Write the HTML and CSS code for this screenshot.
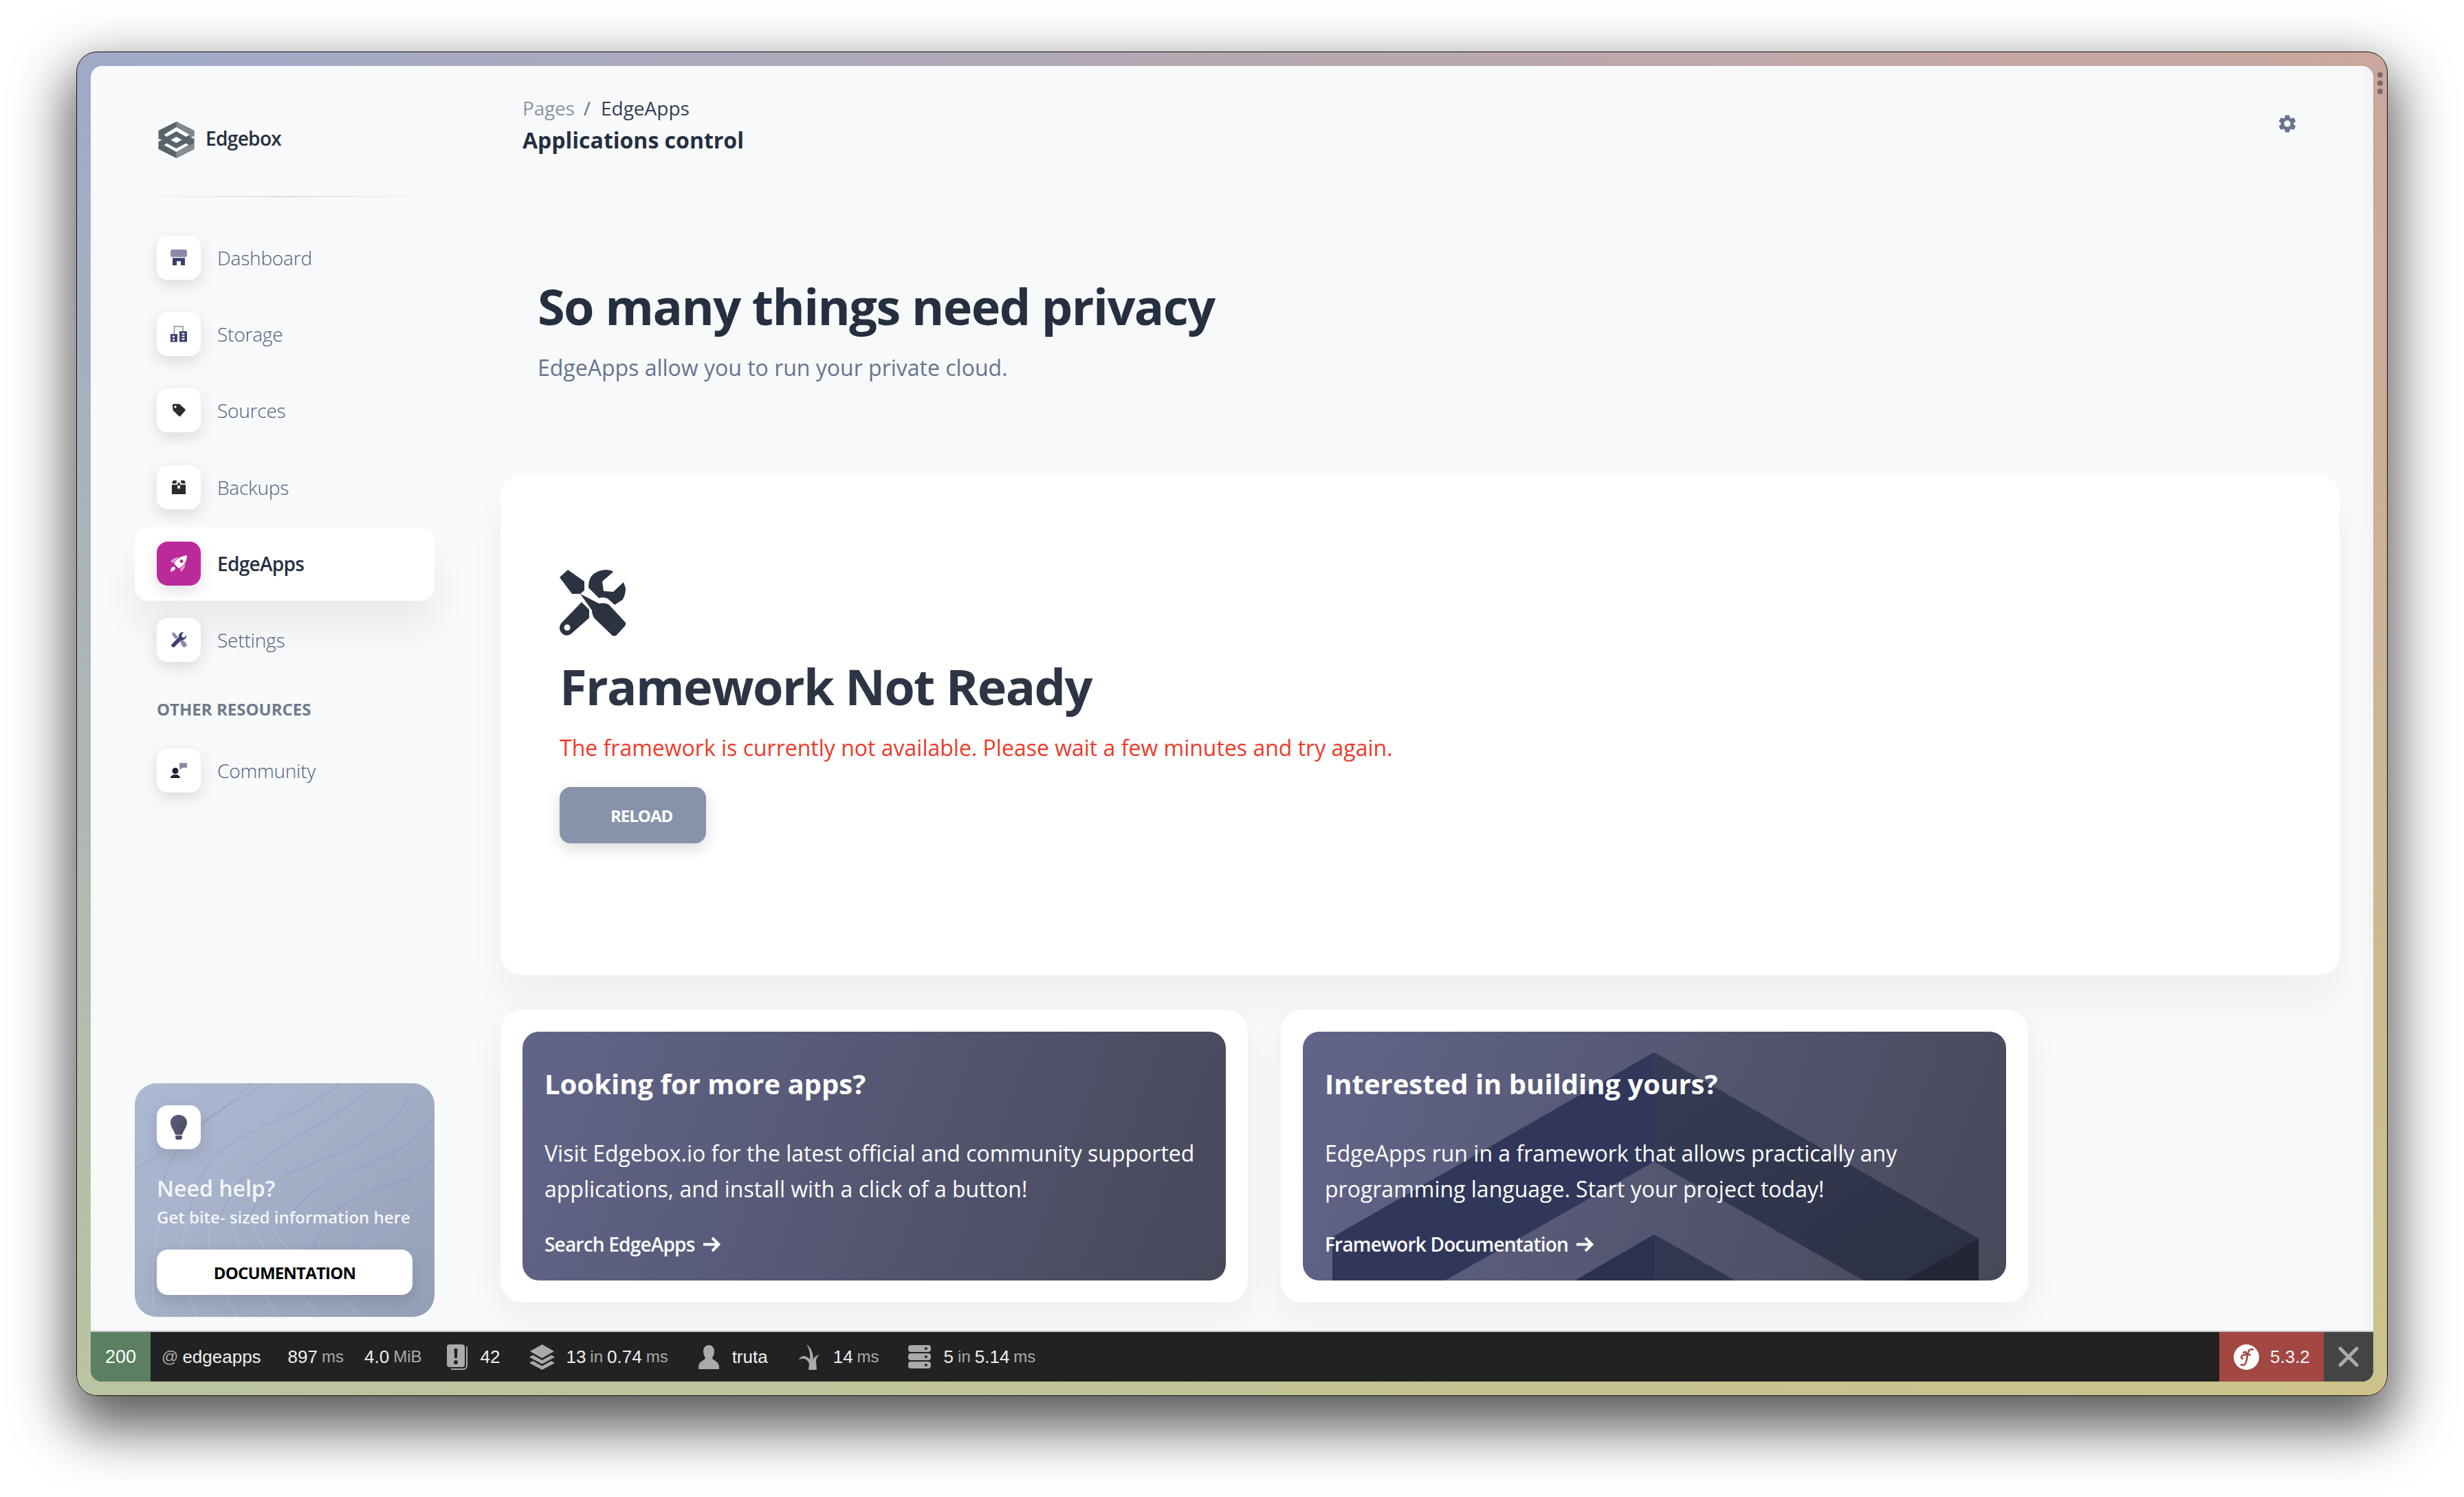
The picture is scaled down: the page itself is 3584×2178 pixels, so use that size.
FILE: index.html
```html
<!DOCTYPE html>
<html lang="en">
<head>
<meta charset="utf-8">
<title>Edgebox - Applications control</title>
<link rel="stylesheet" href="styles.css">
</head>
<body>
<div class="window">
  <div class="frame-tint"></div>
  <div class="frame-dots"><i></i><i></i><i></i></div>
  <div class="app">
    <div class="content">
      <aside class="sidebar">
        <div class="brand">
          <svg class="brand-logo" viewBox="0 0 52 53">
            <polygon fill="#59636a" points="26,0 52,13 52,40 26,53 0,40 0,13"/>
            <polygon fill="#7f878c" points="26,0 52,13 52,25 26,12"/>
            <polygon fill="#868e92" points="26,53 52,40 52,31 26,44"/>
            <polygon fill="#fff" points="26,8 45,19 40,22 26,14 12,22 8,19"/>
            <polygon fill="#fff" points="26,22 34,26.500 26,31 18,26.500"/>
            <polygon fill="#fff" points="8,34 12,31.500 26,39 40,31.500 44,34 26,44"/>
            <polygon fill="#fff" points="0,25 5,27 0,29"/>
            <polygon fill="#fff" points="52,25 47,23 52,21"/>
          </svg>
          <span class="brand-name">Edgebox</span>
        </div>
        <div class="divider"></div>
        <nav class="nav">
          <a class="nav-item">
            <span class="nav-icon"><svg viewBox="0 0 24 24" class="ico"><path fill="#8a8ba8" d="M3 0h18a3 3 0 0 1 3 3v6c0 1-1 2-2 1.400-1 .8-2 .8-3 0-1 .8-3 .8-4 0-1 .8-3 .8-4 0-1 .8-3 .8-4 0-1 .8-3 .8-4 0-1 .6-3 .6-3-1.400V3a3 3 0 0 1 3-3z"/><path fill="#3a416f" d="M3 12c1 .4 2 .4 3 0 1 .6 3 .6 4 0 1 .6 3 .6 4 0 1 .6 3 .6 4 0 1 .4 2 .4 3 0v11h-6v-6H9v6H3z"/></svg></span>
            <span>Dashboard</span>
          </a>
          <a class="nav-item">
            <span class="nav-icon"><svg viewBox="0 0 24 24" class="ico"><path fill="none" stroke="#8a8ba8" stroke-width="1.500" d="M5.500 12V1H18v7"/><path fill="#3a416f" d="M0 12h10v11.500H0zM13 8h11v15.500H13z"/><path fill="#fff" d="M3 14.500h3v2.500H3zM3 19h3v2.500H3zM16.500 10.500h4v2h-4zM16.500 14.500h4v2h-4zM16.500 18.500h4v2h-4z"/></svg></span>
            <span>Storage</span>
          </a>
          <a class="nav-item">
            <span class="nav-icon"><svg viewBox="0 0 24 24" class="ico ico-sm"><path fill="#2b2b2b" fill-rule="evenodd" d="M3 1h10l10 9a2 2 0 0 1 0 3l-8 9a2 2 0 0 1-3 0L2 12 1 3a2 2 0 0 1 2-2zm3 3a2 2 0 1 0 0 4 2 2 0 0 0 0-4z"/></svg></span>
            <span>Sources</span>
          </a>
          <a class="nav-item">
            <span class="nav-icon"><svg viewBox="0 0 24 24" class="ico ico-md"><path fill="#2b2b2b" fill-rule="evenodd" d="M3 1h6L8 6H1zM15 1h6l2 5h-7zM1 8h8.500L12 3l2.500 5H23v14a1 1 0 0 1-1 1H2a1 1 0 0 1-1-1zm9 1v5h4V9z"/></svg></span>
            <span>Backups</span>
          </a>
          <a class="nav-item active">
            <span class="nav-icon"><svg viewBox="0 0 24 24" class="ico"><path fill="#fff" fill-rule="evenodd" d="M24 0c0 8-4 15-12 19l-7-7C9 5 15 1 24 0zM16 6a2.500 2.500 0 1 0 0 5 2.500 2.500 0 0 0 0-5zM3 17c2-1 4 0 4 2 0 2-4 4-7 5 0-2 1-6 3-7z"/><path fill="#e6a9d8" d="M21 12c1 4-1 9-6 12l-1-4zM12 3C8 3 3 4 0 9l4 2z" opacity=".9"/></svg></span>
            <span>EdgeApps</span>
          </a>
          <a class="nav-item">
            <span class="nav-icon"><svg viewBox="0 0 24 24" class="ico"><path fill="#8a8ba8" d="M2 1l4 1 5 6-3 3-5-5zM14 14l3-3 6 6c1 2 1 4-1 5-2 1-3 1-5-1z"/><path fill="#3a416f" d="M23 5c1 4-3 8-7 7L6 22c-1 1-3 1-4 0s-1-3 0-4L12 8c-1-4 3-8 7-7l-3 4 1 3 3 1z"/></svg></span>
            <span>Settings</span>
          </a>
        </nav>
        <h6 class="nav-heading">OTHER RESOURCES</h6>
        <nav class="nav">
          <a class="nav-item">
            <span class="nav-icon"><svg viewBox="0 0 24 24" class="ico"><path fill="#8a8ba8" d="M13 1h11v7h-7l-3 3-1-3z"/><path fill="#1f2337" d="M7 8a4.500 4.500 0 1 1 0 9 4.500 4.500 0 0 1 0-9zM0 23c0-3 3-5 7-5s7 2 7 5z"/></svg></span>
            <span>Community</span>
          </a>
        </nav>
        <div class="help">
          <svg class="help-lines" viewBox="0 0 436 340" preserveAspectRatio="none">
            <g fill="none" stroke="#7480a0" stroke-opacity=".22" stroke-width="1.500">
              <path d="M0 125C60 90 130 40 170 0"/>
              <path d="M40 150C60 60 130 40 190 0"/>
              <path d="M80 190C100 60 200 80 300 0"/>
              <path d="M120 210C150 90 270 80 350 0"/>
              <path d="M170 190C200 100 330 130 400 20"/>
              <path d="M210 220C260 110 370 140 436 50"/>
              <path d="M260 240C290 140 380 170 436 110"/>
              <path d="M300 270C340 190 390 210 436 170"/>
            </g>
            <g fill="none" stroke="#fff" stroke-opacity=".14" stroke-width="1.500">
              <path d="M30 340C20 280 30 200 50 170"/>
              <path d="M90 340C70 290 60 240 80 190"/>
              <path d="M150 340C120 290 100 240 110 200"/>
              <path d="M210 340C170 280 150 250 140 190"/>
              <path d="M270 340C230 290 190 260 170 200"/>
              <path d="M330 340C280 290 230 260 200 210"/>
            </g>
          </svg>
          <span class="nav-icon help-icon"><svg viewBox="0 0 24 36" class="bulb"><defs><linearGradient id="bulbg" x1="0" y1="0" x2="1" y2="1"><stop offset="0" stop-color="#5c5f80"/><stop offset="1" stop-color="#45475a"/></linearGradient></defs><path fill="url(#bulbg)" d="M12 0c7 0 12 5 12 11 0 7-5 11-7 18H7C5 22 0 18 0 11 0 5 5 0 12 0zM9 30h6c1 0 2 1 2 2.500S16 36 15 36H9c-1 0-2-2-2-3.500S8 30 9 30z"/></svg></span>
          <div class="help-title">Need help?</div>
          <div class="help-sub">Get bite- sized information here</div>
          <a class="help-btn">DOCUMENTATION</a>
        </div>
      </aside>
      <main class="main">
        <header class="topbar">
          <div>
            <div class="crumbs"><span class="crumb-muted">Pages</span><span class="crumb-sep">/</span><span class="crumb-now">EdgeApps</span></div>
            <div class="page-title">Applications control</div>
          </div>
          <svg class="gear" viewBox="2.500 2 19 20"><path fill="#67748e" d="M19.140 12.940c.04-.3.06-.61.06-.94 0-.32-.02-.64-.07-.94l2.030-1.580c.18-.14.23-.41.12-.61l-1.920-3.320c-.12-.22-.37-.29-.59-.22l-2.390.96c-.5-.38-1.030-.7-1.620-.94l-.36-2.540c-.04-.24-.24-.41-.48-.41h-3.840c-.24 0-.43.17-.47.41l-.36 2.540c-.59.24-1.130.57-1.620.94l-2.390-.96c-.22-.08-.47 0-.59.22L2.740 8.870c-.12.21-.08.47.12.61l2.030 1.580c-.05.3-.09.63-.09.94s.02.64.07.94l-2.030 1.580c-.18.14-.23.41-.12.61l1.920 3.320c.12.22.37.29.59.22l2.390-.96c.5.38 1.030.7 1.620.94l.36 2.540c.05.24.24.41.48.41h3.840c.24 0 .44-.17.47-.41l.36-2.540c.59-.24 1.130-.56 1.620-.94l2.390.96c.22.08.47 0 .59-.22l1.920-3.320c.12-.22.07-.47-.12-.61l-2.010-1.580zM12 15.600c-1.980 0-3.600-1.620-3.600-3.600s1.620-3.600 3.600-3.600 3.600 1.620 3.600 3.600-1.620 3.600-3.600 3.600z"/></svg>
        </header>
        <section class="hero">
          <h1 class="hero-title">So many things need privacy</h1>
          <p class="hero-sub">EdgeApps allow you to run your private cloud.</p>
        </section>
        <section class="status-card">
          <svg class="tools" viewBox="0 0 96 96"><path fill="#2b3240" d="M12 0 0 11l18 24h12l27 14c5-1 11-1 15 2l24 26v3l-2 3-12 13c-2 2-4 1-5 0L51 71c-3-4-4-8-4-12L30 35l6-5V17z"/><path fill="#2b3240" fill-rule="evenodd" d="M32 47l11 11v12L18 92c-4 4-11 5-15 0-4-4-4-11 0-15zM11 79.500a4.500 4.500 0 1 0 0 9 4.500 4.500 0 0 0 0-9z"/><path fill="#2b3240" d="M68 0l7 1 3 2-16 14 2 14 14 1 15-14 3 9c0 7-2 13-5 17l-11 7-10-9c-4-2-9-2-13-1L42 26c0-6 1-11 3-15 5-7 13-11 23-11z"/></svg>
          <h2 class="status-title">Framework Not Ready</h2>
          <p class="status-msg">The framework is currently not available. Please wait a few minutes and try again.</p>
          <a class="reload">RELOAD</a>
        </section>
        <section class="promo-row">
          <article class="promo">
            <div class="promo-inner">
              <h3 class="promo-title">Looking for more apps?</h3>
              <p class="promo-text">Visit Edgebox.io for the latest official and community supported applications, and install with a click of a button!</p>
              <a class="promo-link">Search EdgeApps <svg class="arrow" viewBox="0 0 25 23"><path fill="none" stroke="#fff" stroke-width="4" d="M0 11.500h22M13 2l9.500 9.500L13 21"/></svg></a>
            </div>
          </article>
          <article class="promo">
            <div class="promo-inner">
              <svg class="promo-art" viewBox="0 0 1023 362" preserveAspectRatio="none">
                <defs>
                  <linearGradient id="artr" x1="0" y1="0" x2="1" y2="1"><stop offset="0" stop-color="#353c56"/><stop offset="1" stop-color="#2c3044"/></linearGradient>
                </defs>
                <polygon fill="#31375a" points="43,299 511,30 511,189 207,362 43,362"/>
                <polygon fill="url(#artr)" points="511,30 983,301 983,362 816,362 511,189"/>
                <polygon fill="#2b3150" points="396,362 511,295 511,362"/>
                <polygon fill="#313750" points="511,295 629,362 511,362"/>
                <polygon fill="#222636" points="983,301 983,362 877,362"/>
              </svg>
              <h3 class="promo-title">Interested in building yours?</h3>
              <p class="promo-text">EdgeApps run in a framework that allows practically any programming language. Start your project today!</p>
              <a class="promo-link">Framework Documentation <svg class="arrow" viewBox="0 0 25 23"><path fill="none" stroke="#fff" stroke-width="4" d="M0 11.500h22M13 2l9.500 9.500L13 21"/></svg></a>
            </div>
          </article>
        </section>
      </main>
    </div>
    <footer class="debug">
      <span class="dbg-status">200</span>
      <span class="dbg-item route"><em>@</em> edgeapps</span>
      <span class="dbg-item time">897 <em>ms</em></span>
      <span class="dbg-item mem">4.0 <em>MiB</em></span>
      <span class="dbg-item logs"><svg class="dbg-ico" viewBox="0 0 30 37"><path fill="#aaa" fill-rule="evenodd" d="M4 0h18a4 4 0 0 1 4 4v25a4 4 0 0 1-4 4H4a4 4 0 0 1-4-4V4a4 4 0 0 1 4-4zM10.500 6l.7 14h3.600l.7-14zM13 23a3 3 0 1 0 0 6 3 3 0 0 0 0-6z"/><path fill="none" stroke="#aaa" stroke-width="2" d="M29 3v28a5 5 0 0 1-5 5H6"/></svg>42</span>
      <span class="dbg-item forms"><svg class="dbg-ico" viewBox="0 0 37 37"><path fill="#aaa" d="M18.500 0 36 10 18.500 20 1 10zM5 15.500l13.500 7.500L32 15.500l5 3-18.500 10L0 18.500zM5 24l13.500 7.500L32 24l5 3-18.500 10L0 27z"/></svg>13 <em>in</em> 0.74 <em>ms</em></span>
      <span class="dbg-item user"><svg class="dbg-ico" viewBox="0 0 30 35"><path fill="#aaa" d="M15 0c5 0 8 4 8 9 0 4-2 8-3 10 0 3 10 4 10 13v3H0v-3c0-9 10-10 10-13-1-2-3-6-3-10 0-5 3-9 8-9z"/></svg>truta</span>
      <span class="dbg-item twig"><svg class="dbg-ico" viewBox="0 0 31 37"><path fill="#aaa" d="M11 0c7 4 10 14 10 22 1-3 4-6 9-7-4 3-5 7-5 11l1 11H14l1-8c0-4-4-7-7-8-3-1-6 0-8 2 2-6 7-7 11-5 2 1 4 2 5 4C17 14 15 6 11 0z"/></svg>14 <em>ms</em></span>
      <span class="dbg-item db"><svg class="dbg-ico" viewBox="0 0 33 34"><path fill="#aaa" fill-rule="evenodd" d="M4 0h25a4 4 0 0 1 4 4v2a4 4 0 0 1-4 4H4a4 4 0 0 1-4-4V4a4 4 0 0 1 4-4zm22 3a2 2 0 1 0 0 4 2 2 0 0 0 0-4zM4 12h25a4 4 0 0 1 4 4v2a4 4 0 0 1-4 4H4a4 4 0 0 1-4-4v-2a4 4 0 0 1 4-4zm22 3a2 2 0 1 0 0 4 2 2 0 0 0 0-4zM4 24h25a4 4 0 0 1 4 4v2a4 4 0 0 1-4 4H4a4 4 0 0 1-4-4v-2a4 4 0 0 1 4-4zm22 3a2 2 0 1 0 0 4 2 2 0 0 0 0-4z"/></svg>5 <em>in</em> 5.14 <em>ms</em></span>
      <span class="dbg-spacer"></span>
      <span class="dbg-version"><svg class="sf" viewBox="0 0 37 37"><circle cx="18.500" cy="18.500" r="18.500" fill="#fff"/><path fill="none" stroke="#a34743" stroke-width="2.600" d="M29 8c-3-2-7-1-8 4l-3 14c-1 4-4 5-8 3M14 21c-3 0-4-3-1-5 2-1 6-1 5-4-1-2-4-1-4 1M17 15h8"/></svg>5.3.2</span>
      <span class="dbg-close"><svg class="close-x" viewBox="0 0 30 30"><path stroke="#aaa" stroke-width="5" stroke-linecap="round" d="M3 3l24 24M27 3L3 27"/></svg></span>
    </footer>
  </div>
</div>
</body>
</html>
```
FILE: styles.css
```css
* { box-sizing: border-box; }
html, body { margin: 0; height: 100%; background: #fff; overflow: hidden; }
body { padding: 75px 111px 147px 111px; font-family: "Open Sans", "Liberation Sans", sans-serif; color: #252f40; }
em { font-style: normal; }
h1, h2, h3, h6, p { margin: 0; }

.window {
  position: relative; height: 1956px; padding: 20px; border: 1px solid #111; border-radius: 30px;
  background: linear-gradient(to right, #a0aac8, #cba79e);
  box-shadow: 0 36px 80px 12px rgba(0,0,0,.64);
}
.frame-tint {
  position: absolute; inset: 0; border-radius: 29px;
  background: linear-gradient(to right, #b9c4a2, #cdc389);
  -webkit-mask-image: linear-gradient(to bottom, transparent, #000);
  mask-image: linear-gradient(to bottom, transparent, #000);
}
.frame-dots { position: absolute; right: 6px; top: 29px; display: flex; flex-direction: column; gap: 4px; }
.frame-dots i { width: 8px; height: 8px; border-radius: 50%; background: #7f6a62; }

.app { position: relative; height: 100%; display: flex; flex-direction: column; border-radius: 16px; overflow: hidden; background: #f8f9fa; }
.content { flex: 1; display: flex; min-height: 0; box-shadow: inset -30px 0 30px -30px rgba(0,0,0,.05); }

.sidebar { width: 596px; flex: none; padding: 0 96px 20px 64px; display: flex; flex-direction: column; }
.brand { height: 189px; padding: 81px 0 0 34px; display: flex; align-items: flex-start; }
.brand-logo { width: 53px; height: 53px; flex: none; margin-right: 16px; }
.brand-name { font-size: 28px; font-weight: 600; line-height: 48px; color: #252f40; letter-spacing: -.65px; }
.divider { height: 2px; margin: 0 -26px 0 -26px; background: linear-gradient(to right, transparent, #dfe1e6 50%, transparent); }

.nav { display: flex; flex-direction: column; gap: 4.400px; }
.divider + .nav { margin-top: 34px; }
.nav-item { height: 107px; padding: 0 32px; border-radius: 20px; display: flex; align-items: center; gap: 24px; font-size: 28px; font-weight: 300; color: #4f5d7c; letter-spacing: -.2px; }
.nav-icon { width: 64px; height: 64px; flex: none; display: flex; align-items: center; justify-content: center; border-radius: 16px; background: #fff; box-shadow: 0 8px 22px rgba(0,0,0,.12); }
.ico { width: 24px; height: 24px; overflow: visible; }
.ico-sm { width: 20px; height: 20px; }
.ico-md { width: 22px; height: 22px; }
.nav-item.active { background: #fff; color: #252f40; font-weight: 600; letter-spacing: -.7px; box-shadow: 0 40px 54px rgba(0,0,0,.06); }
.nav-item.active .nav-icon { background: #bb2a9a; }
.nav-heading { margin: 30px 0 0 32px; height: 53px; font-size: 24px; line-height: 34px; font-weight: 700; color: #6f7a8c; }

.help { position: relative; margin-top: auto; height: 340px; padding: 32px; border-radius: 32px; overflow: hidden; background: linear-gradient(135deg, #adb8d2, #a7b2cb 35%, #939eb7); color: #fff; }
.help-lines { position: absolute; inset: 0; width: 100%; height: 100%; }
.help-icon { position: relative; }
.bulb { width: 24px; height: 36px; }
.help-title { position: relative; margin-top: 35px; font-size: 32px; line-height: 44px; font-weight: 600; color: #f4f5f9; }
.help-sub { position: relative; margin-top: 4px; font-size: 24px; line-height: 32px; font-weight: 600; color: #f4f5f9; white-space: nowrap; }
.help-btn { position: relative; display: flex; align-items: center; justify-content: center; width: 372px; height: 66px; margin-top: 31px; border-radius: 16px; background: #fff; color: #000; font-size: 24px; font-weight: 700; letter-spacing: -.8px; box-shadow: 0 8px 20px rgba(0,0,0,.12); }

.main { flex: 1; min-width: 0; padding-right: 49px; }
.topbar { height: 164px; padding: 40px 63px 0 32px; display: flex; justify-content: space-between; align-items: flex-start; }
.crumbs { display: flex; font-size: 28px; line-height: 42px; }
.crumb-muted { color: #8b95a8; letter-spacing: -.2px; }
.crumb-sep { margin: 0 15px 0 13px; color: #67748e; }
.crumb-now { color: #344054; }
.page-title { margin-top: 2px; font-size: 32px; font-weight: 700; line-height: 48px; color: #252f40; }
.gear { width: 26px; height: 26px; margin-top: 31px; }

.hero { padding: 137px 54px 0; height: 429px; }
.hero-title { font-size: 72px; line-height: 96px; font-weight: 700; color: #252f40; letter-spacing: -1.55px; }
.hero-sub { margin-top: 17px; font-size: 32px; line-height: 50px; color: #67748e; }

.status-card { height: 730px; padding: 140px 86px; border-radius: 32px; background: #fff; box-shadow: 0 40px 54px rgba(0,0,0,.04); }
.tools { display: block; width: 96px; height: 96px; }
.status-title { margin-top: 28px; font-size: 72px; line-height: 90px; font-weight: 700; color: #2d3545; letter-spacing: -1.6px; }
.status-msg { margin-top: 20px; font-size: 32px; line-height: 50px; color: #ee3a2a; }
.reload { display: flex; align-items: center; width: 213px; height: 82px; margin-top: 32px; padding-left: 74px; border-radius: 16px; background: #8893ab; color: #fff; font-size: 24px; font-weight: 700; letter-spacing: -1px; box-shadow: 0 8px 22px rgba(0,0,0,.14); }

.promo-row { display: flex; gap: 48px; margin-top: 50px; }
.promo { width: 1087px; height: 426px; padding: 32px; border-radius: 32px; background: #fff; box-shadow: 0 20px 54px rgba(0,0,0,.05); }
.promo-inner { position: relative; height: 362px; padding: 46px 32px 0; border-radius: 24px; overflow: hidden; background: linear-gradient(110deg, #62658a, #47485a); color: #fff; }
.promo-art { position: absolute; inset: 0; width: 100%; height: 100%; }
.promo-title, .promo-text, .promo-link { position: relative; }
.promo-title { font-size: 40px; line-height: 60px; font-weight: 700; }
.promo-text { margin-top: 45px; font-size: 32px; line-height: 52px; }
.promo-link { display: flex; align-items: center; gap: 12px; margin-top: 36px; font-size: 28px; font-weight: 600; letter-spacing: -.8px; line-height: 36px; }
.arrow { width: 25px; height: 23px; }

.debug { height: 74px; flex: none; display: flex; align-items: center; background: #222; border-top: 2px solid #c4c4c8; font-family: "Liberation Sans", Arial, sans-serif; font-size: 26px; color: #f0f0f0; white-space: nowrap; }
.debug em { color: #aaa; font-size: 24px; }
.dbg-status { width: 87px; height: 100%; display: flex; align-items: center; justify-content: center; background: #5b7f60; font-size: 27px; color: #fff; }
.dbg-item { display: flex; align-items: center; gap: 6px; }
.dbg-ico { height: 37px; width: auto; margin-right: 13px; flex: none; }
.route { margin-left: 16px; }
.time { margin-left: 39px; }
.mem { margin-left: 30px; }
.logs { margin-left: 36px; }
.forms { margin-left: 43px; }
.forms .dbg-ico { margin-right: 10px; }
.user { margin-left: 44px; }
.user .dbg-ico { height: 35px; }
.twig { margin-left: 45px; }
.db { margin-left: 42px; }
.db .dbg-ico { height: 34px; }
.dbg-spacer { flex: 1; }
.dbg-version { width: 152px; height: 100%; display: flex; align-items: center; gap: 16px; padding-left: 21px; background: #a34743; color: #f5f5f5; }
.sf { width: 37px; height: 37px; }
.dbg-close { width: 72px; height: 100%; display: flex; align-items: center; justify-content: center; background: #444; }
.close-x { width: 30px; height: 30px; }
```
